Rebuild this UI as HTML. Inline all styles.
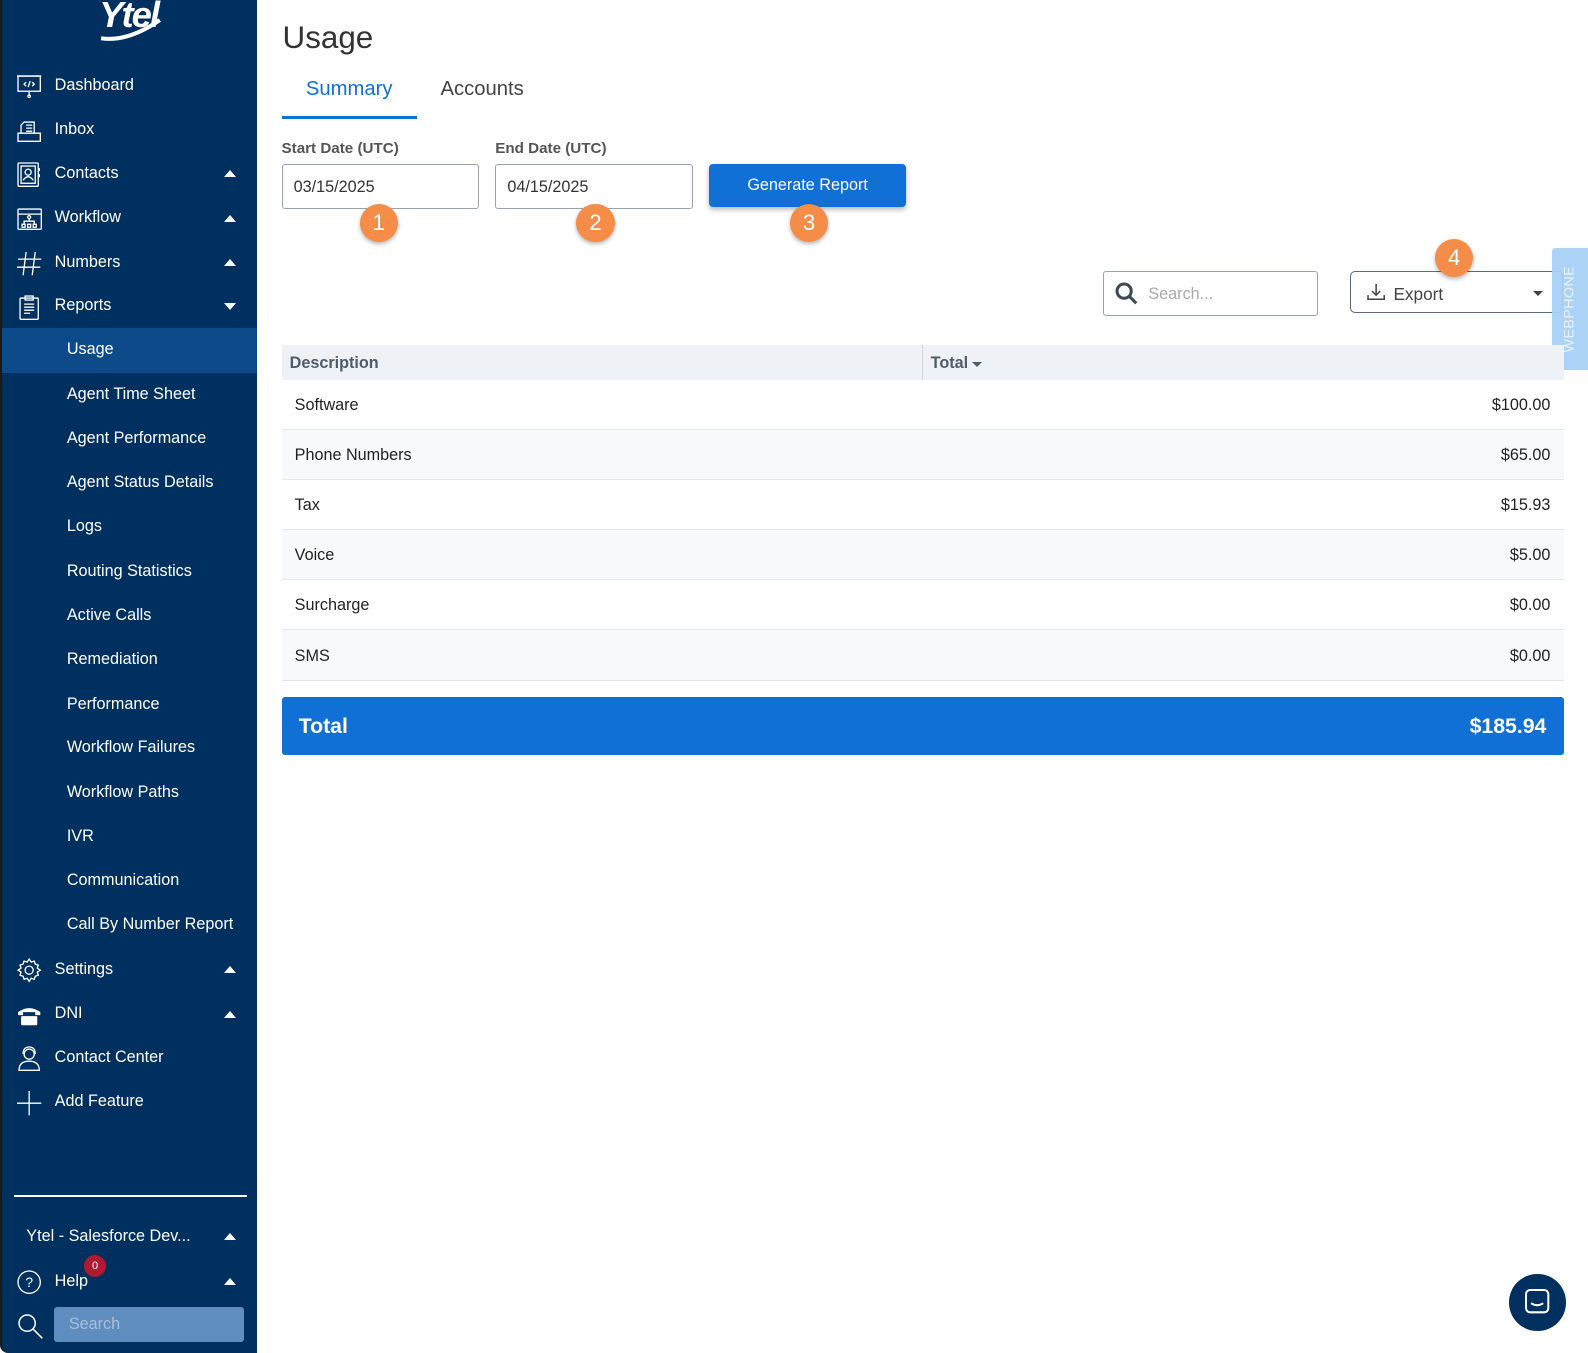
<!DOCTYPE html>
<html><head><meta charset="utf-8"><style>
*{box-sizing:border-box;margin:0;padding:0}
html,body{width:1588px;height:1353px;overflow:hidden;background:#fff;font-family:"Liberation Sans",sans-serif}
#w{zoom:1.0127;width:1568px;height:1336px;position:relative}
.sb{position:absolute;left:0;top:0;width:254px;height:1336px;background:#00305f;color:#fff;border-left:2px solid #1a1a1a;border-bottom-left-radius:8px}
.it{position:absolute;left:0;width:252px;height:44px;font-size:16px;display:flex;align-items:center}
.it .ic{position:absolute;left:14px;top:10px;width:26px;height:26px}
.it .tx{position:absolute;left:52px}
.it .ar{position:absolute;left:219px;width:0;height:0;border-left:6px solid transparent;border-right:6px solid transparent}
.up{border-bottom:7px solid #fff}.dn{border-top:7px solid #fff}
.sub{position:absolute;left:64px;font-size:16px}
.abs{position:absolute}
.inp{position:absolute;height:44px;border:1px solid #9aa3ad;border-radius:3px;font-size:16px;color:#333;padding:13px 11px}
.badge{position:absolute;width:38px;height:38px;border-radius:50%;background:#f58c47;color:#fff;font-size:22px;text-align:center;line-height:38px;box-shadow:0 2px 4px rgba(0,0,0,.3)}
.row{position:absolute;left:278px;width:1266px;height:49.5px;border-bottom:1px solid #e4e7ea;font-size:16px;color:#222}
.row span{position:absolute;top:16px}
.row .v{right:13px}
</style></head><body><div id="w">
<div class="sb">
 <div class="abs" style="left:96px;top:-6px;font-size:36px;font-weight:bold;font-style:italic;letter-spacing:-2px">Ytel</div>
 <svg class="abs" style="left:94px;top:16px" width="70" height="26"><path d="M4 22 Q30 26 62 4" stroke="#fff" stroke-width="4" fill="none"/></svg>
 <div class="it" style="top:62px"><svg class="ic" viewBox="0 0 26 26" fill="none" stroke="#fff" stroke-width="1.3"><rect x="2" y="3" width="22" height="15"/><path d="M1 3h24M13 18v4"/><circle cx="13" cy="23" r="1.2"/><path d="M10 9l-2 2 2 2M16 9l2 2-2 2M14 8l-2 6"/></svg><span class="tx">Dashboard</span></div>
 <div class="it" style="top:106px"><svg class="ic" viewBox="0 0 26 26" fill="none" stroke="#fff" stroke-width="1.3"><path d="M2 16h22v8H2zM5 16V8l3-3h10v11M8 16h10M10 8h6M10 11h6M10 14h6"/></svg><span class="tx">Inbox</span></div>
 <div class="it" style="top:149px"><svg class="ic" viewBox="0 0 26 26" fill="none" stroke="#fff" stroke-width="1.3"><rect x="2" y="2" width="20" height="23" rx="1"/><rect x="5" y="5" width="14" height="17"/><circle cx="12" cy="11" r="3"/><path d="M7 19q5-7 10 0M23 7v3M23 13v3"/></svg><span class="tx">Contacts</span><span class="ar up" style="top:19px"></span></div>
 <div class="it" style="top:193px"><svg class="ic" viewBox="0 0 26 26" fill="none" stroke="#fff" stroke-width="1.3"><rect x="2" y="3" width="23" height="20" rx="1"/><path d="M2 8h23M8 18v-3h10v3M13 15v-3"/><circle cx="13" cy="11" r="1.5"/><rect x="6" y="18" width="3" height="3"/><rect x="11.5" y="18" width="3" height="3"/><rect x="17" y="18" width="3" height="3"/></svg><span class="tx">Workflow</span><span class="ar up" style="top:19px"></span></div>
 <div class="it" style="top:237px"><svg class="ic" viewBox="0 0 26 26" fill="none" stroke="#fff" stroke-width="1.3"><path d="M10 2L7 25M19 2l-3 23M2 9h23M1 17h23"/></svg><span class="tx">Numbers</span><span class="ar up" style="top:19px"></span></div>
 <div class="it" style="top:280px"><svg class="ic" viewBox="0 0 26 26" fill="none" stroke="#fff" stroke-width="1.3"><rect x="4" y="4" width="18" height="21" rx="1"/><rect x="9" y="2" width="8" height="4"/><path d="M8 10h10M8 13h10M8 16h10M8 19h6"/></svg><span class="tx">Reports</span><span class="ar dn" style="top:19px"></span></div>
 <div class="abs" style="left:0;top:324px;width:252px;height:44px;background:#0d4a8a"></div>
 <div class="sub" style="top:336px">Usage</div>
 <div class="sub" style="top:380px">Agent Time Sheet</div>
 <div class="sub" style="top:424px">Agent Performance</div>
 <div class="sub" style="top:467px">Agent Status Details</div>
 <div class="sub" style="top:511px">Logs</div>
 <div class="sub" style="top:555px">Routing Statistics</div>
 <div class="sub" style="top:598px">Active Calls</div>
 <div class="sub" style="top:642px">Remediation</div>
 <div class="sub" style="top:686px">Performance</div>
 <div class="sub" style="top:729px">Workflow Failures</div>
 <div class="sub" style="top:773px">Workflow Paths</div>
 <div class="sub" style="top:817px">IVR</div>
 <div class="sub" style="top:860px">Communication</div>
 <div class="sub" style="top:904px">Call By Number Report</div>
 <div class="it" style="top:935px"><svg class="ic" viewBox="0 0 26 26" fill="none" stroke="#fff" stroke-width="1.3"><circle cx="13" cy="13" r="4"/><path d="M13 2l2 3 3-1 1 3 3 1-1 3 3 2-3 2 1 3-3 1-1 3-3-1-2 3-2-3-3 1-1-3-3-1 1-3-3-2 3-2-1-3 3-1 1-3 3 1z"/></svg><span class="tx">Settings</span><span class="ar up" style="top:19px"></span></div>
 <div class="it" style="top:979px"><svg class="ic" viewBox="0 0 26 26" fill="#fff"><path d="M2 10q11-8 22 0v3h-5v-3H7v3H2z"/><rect x="5" y="14" width="16" height="9" rx="1"/></svg><span class="tx">DNI</span><span class="ar up" style="top:19px"></span></div>
 <div class="it" style="top:1022px"><svg class="ic" viewBox="0 0 26 26" fill="none" stroke="#fff" stroke-width="1.3"><circle cx="13" cy="9" r="5"/><path d="M3 25q0-9 10-9t10 9zM7 9q0-7 6-7t6 7"/></svg><span class="tx">Contact Center</span></div>
 <div class="it" style="top:1066px"><svg class="ic" viewBox="0 0 26 26" fill="none" stroke="#fff" stroke-width="1.3"><path d="M13 1v24M1 13h24"/></svg><span class="tx">Add Feature</span></div>
 <div class="abs" style="left:12px;top:1180px;width:230px;height:2px;background:#fff"></div>
 <div class="abs" style="left:24px;top:1212px;font-size:16px">Ytel - Salesforce Dev...</div>
 <span class="abs up" style="left:219px;top:1218px;width:0;height:0;border-left:6px solid transparent;border-right:6px solid transparent"></span>
 <svg class="abs" style="left:14px;top:1253px" width="26" height="26" fill="none" stroke="#fff" stroke-width="1.3"><circle cx="13" cy="13" r="11"/><text x="13" y="18" font-size="14" fill="#fff" stroke="none" text-anchor="middle" font-family="Liberation Sans">?</text></svg>
 <div class="abs" style="left:52px;top:1256px;font-size:16px">Help</div>
 <div class="abs" style="left:81px;top:1239px;width:22px;height:22px;border-radius:50%;background:#b0192f;font-size:11px;text-align:center;line-height:22px">0</div>
 <span class="abs up" style="left:219px;top:1262px;width:0;height:0;border-left:6px solid transparent;border-right:6px solid transparent"></span>
 <svg class="abs" style="left:14px;top:1296px" width="28" height="28" fill="none" stroke="#fff" stroke-width="1.5"><circle cx="11" cy="11" r="8"/><path d="M17 17l9 9"/></svg>
 <div class="abs" style="left:51px;top:1291px;width:188px;height:34px;background:#5f8dc0;border-radius:3px;color:#a9bfd9;font-size:16px;padding:8px 15px">Search</div>
</div>
<div class="abs" style="left:279px;top:20px;font-size:31px;color:#333">Usage</div>
<div class="abs" style="left:302px;top:77px;font-size:20px;color:#1070d6">Summary</div>
<div class="abs" style="left:278px;top:115px;width:134px;height:3px;background:#1070d6"></div>
<div class="abs" style="left:435px;top:77px;font-size:20px;color:#444">Accounts</div>
<div class="abs" style="left:278px;top:138px;font-size:15px;font-weight:bold;color:#555">Start Date (UTC)</div>
<div class="abs" style="left:489px;top:138px;font-size:15px;font-weight:bold;color:#555">End Date (UTC)</div>
<div class="inp" style="left:278px;top:162px;width:195px">03/15/2025</div>
<div class="inp" style="left:489px;top:162px;width:195px">04/15/2025</div>
<div class="abs" style="left:700px;top:162px;width:195px;height:42px;background:#1070d6;border-radius:4px;color:#fff;font-size:16px;text-align:center;line-height:42px;box-shadow:0 2px 5px rgba(0,0,0,.3)">Generate Report</div>
<div class="badge" style="left:355px;top:201px">1</div>
<div class="badge" style="left:569px;top:201px">2</div>
<div class="badge" style="left:780px;top:201px">3</div>
<div class="inp" style="left:1089px;top:268px;width:212px;color:#aaa;padding-left:44px;padding-top:12px">Search...</div>
<svg class="abs" style="left:1100px;top:277px" width="26" height="26" fill="none" stroke="#3d4a55" stroke-width="3"><circle cx="10" cy="10" r="7"/><path d="M15 15l7 7"/></svg>
<div class="inp" style="left:1333px;top:268px;width:210px;height:41px;border-color:#5c6b78;border-radius:5px;color:#444;padding:11px 42px;font-size:17px">Export</div>
<svg class="abs" style="left:1350px;top:279px" width="18" height="18" fill="none" stroke="#444" stroke-width="1.5"><path d="M9 1v11M5 8l4 4 4-4M1 12v4h16v-4"/></svg>
<div class="abs" style="left:1514px;top:287px;border-left:5px solid transparent;border-right:5px solid transparent;border-top:5px solid #444"></div>
<div class="badge" style="left:1417px;top:236px">4</div>
<div class="abs" style="left:1533px;top:245px;width:35px;height:120px;background:#a8d0f5;border-radius:3px 0 0 3px;opacity:.95"></div>
<div class="abs" style="left:1490px;top:296px;width:120px;height:18px;line-height:18px;transform:rotate(-90deg);color:#e6f2fc;font-size:14px;text-align:center;letter-spacing:.5px">WEBPHONE</div>
<div class="abs" style="left:278px;top:341px;width:1266px;height:34px;background:#eef2f6"></div>
<div class="abs" style="left:910px;top:341px;width:1px;height:34px;background:#d0d5da"></div>
<div class="abs" style="left:286px;top:350px;font-size:16px;font-weight:bold;color:#4f5b66">Description</div>
<div class="abs" style="left:919px;top:350px;font-size:16px;font-weight:bold;color:#4f5b66">Total</div>
<div class="abs" style="left:960px;top:357px;border-left:5px solid transparent;border-right:5px solid transparent;border-top:5px solid #4f5b66"></div>
<div class="row" style="top:375px"><span style="left:13px">Software</span><span class="v">$100.00</span></div>
<div class="row" style="top:424.5px;background:#f8f9fa"><span style="left:13px">Phone Numbers</span><span class="v">$65.00</span></div>
<div class="row" style="top:474px"><span style="left:13px">Tax</span><span class="v">$15.93</span></div>
<div class="row" style="top:523.5px;background:#f8f9fa"><span style="left:13px">Voice</span><span class="v">$5.00</span></div>
<div class="row" style="top:573px"><span style="left:13px">Surcharge</span><span class="v">$0.00</span></div>
<div class="row" style="top:622.5px;background:#f8f9fa"><span style="left:13px">SMS</span><span class="v">$0.00</span></div>
<div class="abs" style="left:278px;top:688px;width:1266px;height:58px;background:#1070d6;border-radius:3px;color:#fff;font-size:21px;font-weight:bold"><span class="abs" style="left:17px;top:17px">Total</span><span class="abs" style="right:17px;top:17px">$185.94</span></div>
<div class="abs" style="left:1490px;top:1258px;width:56px;height:56px;border-radius:50%;background:#00305f"></div>
<svg class="abs" style="left:1505px;top:1272px" width="26" height="28" fill="none" stroke="#fff" stroke-width="2"><rect x="2" y="2" width="22" height="22" rx="4"/><path d="M7 15q6 4 12 0"/></svg>
</div></body></html>
